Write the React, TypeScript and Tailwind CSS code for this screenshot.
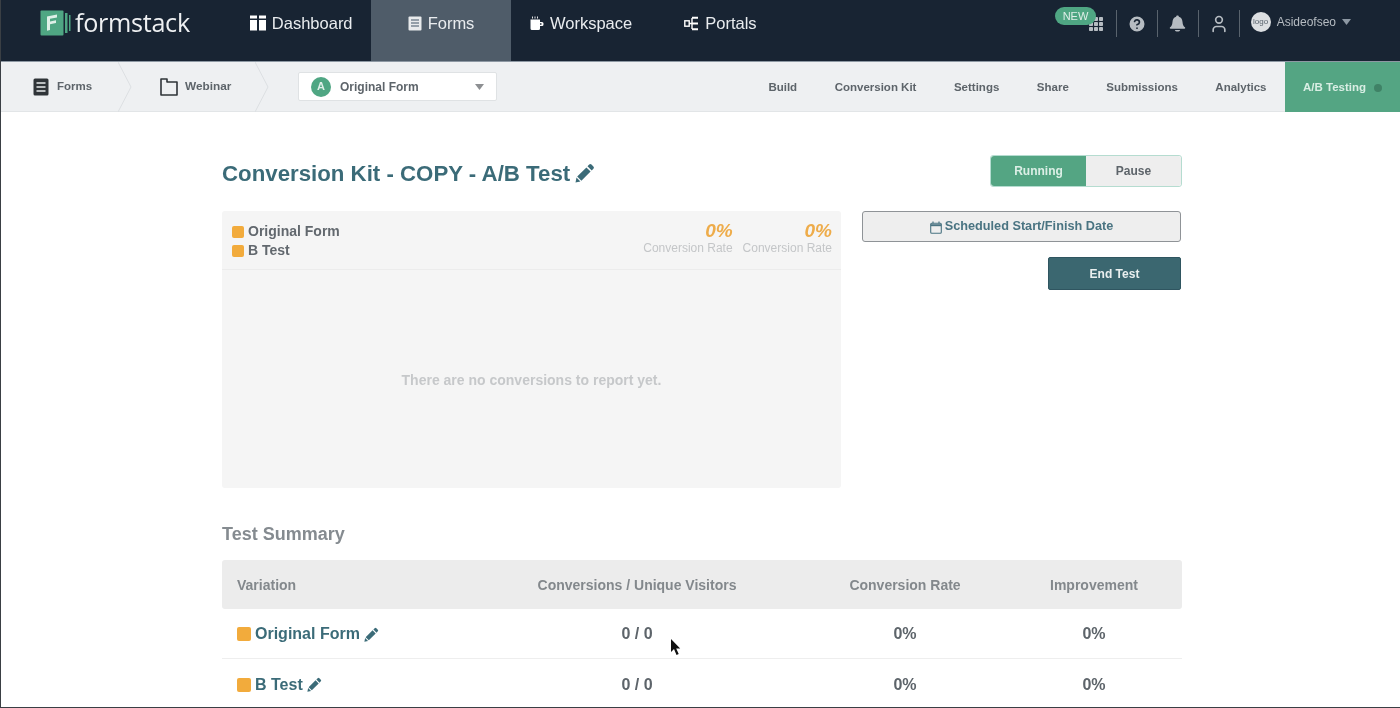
import React from "react";
import { CircleHelp, User } from "lucide-react";

const Pencil = ({ size = 20 }: { size?: number }) => (
  <svg width={size} height={size} viewBox="0 0 20 20" fill="currentColor" className="shrink-0">
    <path d="M14.2 1.6a1.6 1.6 0 0 1 2.3 0l1.9 1.9a1.6 1.6 0 0 1 0 2.3l-1.7 1.7-4.2-4.2zM11.4 4.4l4.2 4.2-9.2 9.2-4.2-4.2zM1.5 14.6l3.9 3.9-4.9 1z" />
  </svg>
);

const Calendar = () => (
  <svg width="12" height="13" viewBox="0 0 12 13" fill="none" stroke="currentColor" className="shrink-0">
    <rect x="0.7" y="2.2" width="10.6" height="10" rx="1" strokeWidth="1.1" />
    <path d="M0.7 4.2h10.6" strokeWidth="2" />
    <path d="M3 0.5v2M9 0.5v2" strokeWidth="1.2" />
  </svg>
);

const Logo = () => (
  <svg width="31" height="26" viewBox="0 0 31 26" className="shrink-0">
    <rect x="0.5" y="0.5" width="23" height="25" rx="1" fill="#4fa683" />
    <path d="M25 3h2.5v20H25z" fill="#4fa683" />
    <path d="M29 5h1.5v16H29z" fill="#4fa683" />
    <path d="M7 6.5l10-2v3l-7 1.3v2.7l6-1.2v2.8l-6 1.2V20l-3 .8z" fill="#dff0e8" />
  </svg>
);

const DashIcon = () => (
  <svg width="16" height="16" viewBox="0 0 16 16" fill="#fff" className="shrink-0">
    <rect x="0" y="0.5" width="7" height="3" />
    <rect x="9" y="0.5" width="7" height="3" />
    <rect x="0" y="5" width="7" height="10.5" />
    <rect x="9" y="5" width="7" height="10.5" />
  </svg>
);

const FormIcon = () => (
  <svg width="14" height="15" viewBox="0 0 14 15" className="shrink-0">
    <rect x="0.5" y="0.5" width="13" height="14" rx="1" fill="#e8eaec" />
    <path d="M3 4h8M3 7h8M3 10h8" stroke="#7a8792" strokeWidth="1.3" />
  </svg>
);

const CupIcon = () => (
  <svg width="14" height="15" viewBox="0 0 14 15" fill="#fff" className="shrink-0">
    <path d="M0.5 3.5h9.5v9a1.5 1.5 0 0 1-1.5 1.5H2a1.5 1.5 0 0 1-1.5-1.5z" />
    <path d="M10 6h2a1.5 1.5 0 0 1 1.5 1.5v1A1.5 1.5 0 0 1 12 10h-2V8.8h1.5V7.2H10z" />
    <path d="M2.5 0.5v2M5 0.5v2M7.5 0.5v2" stroke="#fff" strokeWidth="0.9" />
  </svg>
);

const PortalIcon = () => (
  <svg width="15" height="15" viewBox="0 0 15 15" fill="none" stroke="#fff" strokeWidth="1.4" className="shrink-0">
    <rect x="0.8" y="4.8" width="4.4" height="5.4" />
    <path d="M5 7.5h3M8 2v11" />
    <path d="M8 1.7h6M8 7.5h6M8 13.3h6" strokeWidth="2" />
  </svg>
);

const GridIcon = () => (
  <svg width="16" height="16" viewBox="0 0 16 16" fill="#b6bcc2" className="shrink-0">
    {[1, 6, 11].flatMap((y) =>
      [1, 6, 11].map((x) => <rect key={`${x}-${y}`} x={x} y={y} width="4" height="4" rx="0.8" />)
    )}
  </svg>
);

const Bell = () => (
  <svg width="17" height="17" viewBox="0 0 16 16" fill="#b6bcc2" className="shrink-0">
    <path d="M8 0.5c.8 0 1.2.5 1.3 1.2C11.7 2.4 12.6 4.4 12.8 7c.1 2 .8 3.4 2.2 4.6.5.4.3 1.4-.5 1.4H1.5c-.8 0-1-1-.5-1.4C2.4 10.4 3.1 9 3.2 7c.2-2.6 1.1-4.6 3.5-5.3C6.8 1 7.2.5 8 .5z" />
    <path d="M5.5 14h5c-.3 1-1.2 1.6-2.5 1.6S5.800 15 5.500 14z" />
  </svg>
);

const FormsDark = () => (
  <svg width="16" height="18" viewBox="0 0 16 18" className="shrink-0">
    <rect x="0.5" y="0.5" width="15" height="17" rx="1.5" fill="#2f3438" />
    <path d="M3.5 5h9M3.5 9h9M3.5 13h9" stroke="#e8eaec" strokeWidth="1.4" />
  </svg>
);

const Folder = () => (
  <svg width="18" height="18" viewBox="0 0 18 18" fill="none" stroke="#2f3438" strokeWidth="1.6" className="shrink-0">
    <path d="M1 1h6v3h10v13H1z" strokeLinejoin="round" />
  </svg>
);

const Chevron = () => (
  <svg width="14" height="50" viewBox="0 0 14 50" fill="none" stroke="#dcdfe2" className="shrink-0">
    <path d="M0 0l13 25L0 50" />
  </svg>
);

const Swatch = ({ big }: { big?: boolean }) =>
  big ? (
    <span className="w-[14px] h-[14px] rounded-[2px] bg-[#f2ab3c] shrink-0" />
  ) : (
    <span className="w-3 h-3 rounded-[2px] bg-[#f2ab3c] shrink-0" />
  );

const NavItem = ({ icon, label }: { icon: React.ReactNode; label: string }) => (
  <div className="flex items-center gap-[6px] h-full pb-[15px] text-[16.5px]">
    {icon}
    <span>{label}</span>
  </div>
);

const Divider = () => <span className="w-px h-[27px] bg-[#59636d] shrink-0" />;
const Slot = ({ children }: { children: React.ReactNode }) => (
  <div className="w-[40px] h-[27px] flex items-center justify-center">{children}</div>
);

const Row = ({ name, border }: { name: string; border?: boolean }) => (
  <div className={`grid grid-cols-[270px_290px_246px_132px] h-[50px] items-center pt-[1px] text-[16px] font-bold text-[#5d646a] ${border ? "border-b border-[#eeeeee]" : ""}`}>
    <div className="flex items-center gap-[4px] pl-[15px] text-[#3b6b78]">
      <Swatch big />
      <span>{name}</span>
      <Pencil size={15} />
    </div>
    <div className="text-center">0 / 0</div>
    <div className="text-center">0%</div>
    <div className="text-center">0%</div>
  </div>
);

export default function App() {
  return (
    <div className="relative h-[708px] w-[1400px] overflow-hidden bg-white border-l border-b border-[#3a3f44] font-['Liberation_Sans',sans-serif] blur-[0.5px]">
      <header className="flex h-[62px] bg-[#182433] border-b border-[#8d98a3] text-[#e9ecef]">
        <div className="flex items-center pl-[39px] w-[370px] shrink-0">
          <div className="flex items-center gap-[4px] pb-[15px] h-full">
            <Logo />
            <span className="text-[25.2px] leading-none font-['Open_Sans',sans-serif] text-[#eef0f2] tracking-[-0.3px]">formstack</span>
          </div>
          <div className="ml-[60px] h-full">
            <NavItem icon={<DashIcon />} label="Dashboard" />
          </div>
        </div>
        <div className="w-[140px] bg-[#4f5c69] flex items-center justify-center">
          <NavItem icon={<FormIcon />} label="Forms" />
        </div>
        <div className="ml-[19px]">
          <NavItem icon={<CupIcon />} label="Workspace" />
        </div>
        <div className="ml-[52px]">
          <NavItem icon={<PortalIcon />} label="Portals" />
        </div>
        <div className="ml-auto flex items-start pt-[10px] pr-[49px] text-[#b6bcc2] relative">
          <span className="absolute left-[-33px] top-[7px] px-[8px] h-[18px] flex items-center rounded-full bg-[#4fa683] text-[#dfeee8] text-[11px] z-10">NEW</span>
          <div className="w-[16px] h-[27px] mr-[12px] flex items-center"><GridIcon /></div>
          <Divider />
          <Slot><CircleHelp size={20} fill="#b6bcc2" stroke="#182433" /></Slot>
          <Divider />
          <Slot><Bell /></Slot>
          <Divider />
          <Slot><User size={20} strokeWidth={2} /></Slot>
          <Divider />
          <div className="flex items-center gap-[6px] h-[24px] ml-[11px]">
            <span className="w-[20px] h-[20px] rounded-full bg-[#dcdfe2] text-[#59636d] text-[8px] flex items-center justify-center">logo</span>
            <span className="text-[12px]">Asideofseo</span>
            <svg width="9" height="6" viewBox="0 0 9 6" fill="#8d98a3"><path d="M0 0h9L4.5 6z" /></svg>
          </div>
        </div>
      </header>

      <nav className="flex items-center h-[50px] bg-[#eef0f2] border-b border-[#e2e5e7] text-[11.5px] font-bold text-[#5d646a]">
        <div className="flex items-center gap-[8px] pl-[32px] w-[117px]">
          <FormsDark />
          <span>Forms</span>
        </div>
        <Chevron />
        <div className="flex items-center gap-[7px] pl-[28px] w-[123px] text-[11.8px]">
          <Folder />
          <span>Webinar</span>
        </div>
        <Chevron />
        <div className="ml-[29px] flex items-center w-[199px] h-[29px] text-[12px] bg-white border border-[#dfe2e4] rounded-[2px] pl-[12px] pr-[12px]">
          <span className="w-[20px] h-[20px] rounded-full bg-[#4fa683] text-[#dfeee8] text-[11px] flex items-center justify-center">A</span>
          <span className="ml-[9px]">Original Form</span>
          <svg width="9" height="6" viewBox="0 0 9 6" fill="#8d8f92" className="ml-auto"><path d="M0 0h9L4.5 6z" /></svg>
        </div>
        <div className="ml-auto flex items-center h-full gap-[37.5px] pt-[3px]">
          <span>Build</span>
          <span>Conversion Kit</span>
          <span>Settings</span>
          <span>Share</span>
          <span>Submissions</span>
          <span>Analytics</span>
          <div className="flex items-center gap-[8px] w-[115px] h-[50px] -mt-[3px] pt-[3px] pl-[18px] bg-[#54a583] text-[#d9eee4] -ml-[19px]">
            <span>A/B Testing</span>
            <span className="w-[8px] h-[8px] rounded-full bg-[#3f8266]" />
          </div>
        </div>
      </nav>

      <main className="ml-[221px] w-[960px] pt-[43px]">
        <div className="flex h-[56px]">
          <div className="flex items-start gap-[5px] text-[#3b6b78]">
            <h1 className="text-[22.25px] leading-[37px] font-bold whitespace-nowrap">Conversion Kit - COPY - A/B Test</h1>
            <div className="pt-[8px]"><Pencil size={20} /></div>
          </div>
          <div className="ml-auto flex h-[32px] w-[192px] rounded-[3px] border border-[#b5dcd0] text-[12px] font-bold">
            <div className="w-[95px] bg-[#54a583] text-[#dcefe6] flex items-center justify-center rounded-l-[3px]">Running</div>
            <div className="flex-1 bg-[#eeeeee] text-[#5d646a] flex items-center justify-center rounded-r-[3px]">Pause</div>
          </div>
        </div>

        <div className="flex gap-[21px]">
          <section className="w-[619px] h-[277px] bg-[#f5f5f5] rounded-[3px] flex flex-col">
            <div className="h-[59px] border-b border-[#ececec] flex justify-between pl-[10px] pr-[9px] pt-[10px]">
              <div className="text-[14px] font-bold text-[#62686e] leading-[19px] pt-[1px]">
                <div className="flex items-center gap-[4px]"><Swatch />Original Form</div>
                <div className="flex items-center gap-[4px]"><Swatch />B Test</div>
              </div>
              <div className="flex gap-[10px] text-right">
                {[0, 1].map((i) => (
                  <div key={i}>
                    <div className="text-[19px] leading-[20px] font-bold italic text-[#eeac4a]">0%</div>
                    <div className="text-[12px] leading-[15px] text-[#c4c6c8]">Conversion Rate</div>
                  </div>
                ))}
              </div>
            </div>
            <div className="flex-1 flex items-center justify-center text-[14px] font-bold text-[#c6c8ca] pt-[2px]">
              There are no conversions to report yet.
            </div>
          </section>

          <aside className="w-[319px] flex flex-col items-end">
            <div className="w-full h-[31px] flex items-center justify-center gap-[3px] pt-[1px] bg-[#eeeeee] border border-[#8f9397] rounded-[3px] text-[12.7px] font-bold text-[#4a7482]">
              <Calendar />
              <span>Scheduled Start/Finish Date</span>
            </div>
            <div className="mt-[15px] w-[133px] h-[33px] flex items-center justify-center bg-[#3b6770] border border-[#2f5560] rounded-[2px] text-[12px] font-bold text-[#e9efef]">
              End Test
            </div>
          </aside>
        </div>

        <h2 className="mt-[34px] text-[18px] leading-[24px] font-bold text-[#858b90]">Test Summary</h2>

        <div className="mt-[14px]">
          <div className="grid grid-cols-[270px_290px_246px_132px] h-[49px] items-center pt-[1px] bg-[#ececec] rounded-[3px] text-[14px] font-bold text-[#83888c]">
            <div className="pl-[15px]">Variation</div>
            <div className="text-center">Conversions / Unique Visitors</div>
            <div className="text-center">Conversion Rate</div>
            <div className="text-center">Improvement</div>
          </div>
          <Row name="Original Form" border />
          <Row name="B Test" />
        </div>
      </main>

      <svg width="12" height="18" viewBox="0 0 12 18" className="absolute left-[669px] top-[638px]">
        <path d="M1 1v13l3-3 2.5 6 2.2-1-2.5-5.5h4z" fill="#111" />
      </svg>
    </div>
  );
}
